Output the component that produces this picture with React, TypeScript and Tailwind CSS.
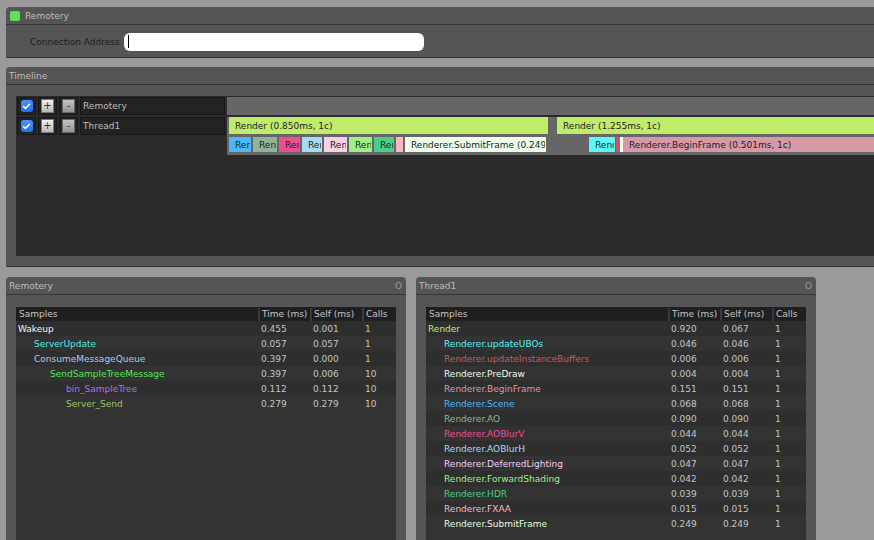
import { Check } from 'lucide-react';

type Sample = {
  name: string;
  depth: number;
  color: string;
  time: string;
  self: string;
  calls: string;
};

const indent = ['pl-[2px]', 'pl-[18px]', 'pl-[34px]', 'pl-[50px]'];

const remoterySamples: Sample[] = [
  { name: 'Wakeup', depth: 0, color: 'text-[#f2f2f2]', time: '0.455', self: '0.001', calls: '1' },
  { name: 'ServerUpdate', depth: 1, color: 'text-[#5ae6e6]', time: '0.057', self: '0.057', calls: '1' },
  { name: 'ConsumeMessageQueue', depth: 1, color: 'text-[#a9c9f0]', time: '0.397', self: '0.000', calls: '1' },
  { name: 'SendSampleTreeMessage', depth: 2, color: 'text-[#56e356]', time: '0.397', self: '0.006', calls: '10' },
  { name: 'bin_SampleTree', depth: 3, color: 'text-[#b56ce6]', time: '0.112', self: '0.112', calls: '10' },
  { name: 'Server_Send', depth: 3, color: 'text-[#9dc46b]', time: '0.279', self: '0.279', calls: '10' },
];

const threadSamples: Sample[] = [
  { name: 'Render', depth: 0, color: 'text-[#c0ec6a]', time: '0.920', self: '0.067', calls: '1' },
  { name: 'Renderer.updateUBOs', depth: 1, color: 'text-[#5cf2f2]', time: '0.046', self: '0.046', calls: '1' },
  { name: 'Renderer.updateInstanceBuffers', depth: 1, color: 'text-[#c85868]', time: '0.006', self: '0.006', calls: '1' },
  { name: 'Renderer.PreDraw', depth: 1, color: 'text-[#eefcec]', time: '0.004', self: '0.004', calls: '1' },
  { name: 'Renderer.BeginFrame', depth: 1, color: 'text-[#d699a7]', time: '0.151', self: '0.151', calls: '1' },
  { name: 'Renderer.Scene', depth: 1, color: 'text-[#4bb8f8]', time: '0.068', self: '0.068', calls: '1' },
  { name: 'Renderer.AO', depth: 1, color: 'text-[#94b396]', time: '0.090', self: '0.090', calls: '1' },
  { name: 'Renderer.AOBlurV', depth: 1, color: 'text-[#ef4d90]', time: '0.044', self: '0.044', calls: '1' },
  { name: 'Renderer.AOBlurH', depth: 1, color: 'text-[#a9daf3]', time: '0.052', self: '0.052', calls: '1' },
  { name: 'Renderer.DeferredLighting', depth: 1, color: 'text-[#f5d0ea]', time: '0.047', self: '0.047', calls: '1' },
  { name: 'Renderer.ForwardShading', depth: 1, color: 'text-[#9ef085]', time: '0.042', self: '0.042', calls: '1' },
  { name: 'Renderer.HDR', depth: 1, color: 'text-[#47d08a]', time: '0.039', self: '0.039', calls: '1' },
  { name: 'Renderer.FXAA', depth: 1, color: 'text-[#fbb6c5]', time: '0.015', self: '0.015', calls: '1' },
  { name: 'Renderer.SubmitFrame', depth: 1, color: 'text-[#e6fde0]', time: '0.249', self: '0.249', calls: '1' },
];

// pixel offsets inside the Thread1 timeline row
const bars = [
  { label: 'Render (0.850ms, 1c)', left: 2, width: 319, top: 0, height: 17, bg: 'bg-[#c0ec6a]' },
  { label: 'Render (1.255ms, 1c)', left: 330, width: 420, top: 0, height: 17, bg: 'bg-[#c0ec6a]' },
  { label: 'Renderer.Scene (0.068ms, 1c)', left: 2, width: 22, top: 20, height: 15, bg: 'bg-[#4bb8f8]' },
  { label: 'Renderer.AO (0.090ms, 1c)', left: 26, width: 24, top: 20, height: 15, bg: 'bg-[#94b396]' },
  { label: 'Renderer.AOBlurV (0.044ms, 1c)', left: 52, width: 21, top: 20, height: 15, bg: 'bg-[#ef4d90]' },
  { label: 'Renderer.AOBlurH (0.052ms, 1c)', left: 75, width: 20, top: 20, height: 15, bg: 'bg-[#a9daf3]' },
  { label: 'Renderer.DeferredLighting (0.047ms, 1c)', left: 97, width: 23, top: 20, height: 15, bg: 'bg-[#f5d0ea]' },
  { label: 'Renderer.ForwardShading (0.042ms, 1c)', left: 122, width: 23, top: 20, height: 15, bg: 'bg-[#9ef085]' },
  { label: 'Renderer.HDR (0.039ms, 1c)', left: 147, width: 20, top: 20, height: 15, bg: 'bg-[#47d08a]' },
  { label: '', left: 169, width: 7, top: 20, height: 15, bg: 'bg-[#fbb6c5]' },
  { label: 'Renderer.SubmitFrame (0.249ms, 1c)', left: 178, width: 141, top: 20, height: 15, bg: 'bg-[#effeec]' },
  { label: 'Renderer.updateUBOs (0.046ms, 1c)', left: 362, width: 26, top: 20, height: 15, bg: 'bg-[#5cf8f8]' },
  { label: '', left: 389, width: 3, top: 20, height: 15, bg: 'bg-[#d05262]' },
  { label: '', left: 393, width: 2, top: 20, height: 15, bg: 'bg-[#effeec]' },
  { label: 'Renderer.BeginFrame (0.501ms, 1c)', left: 396, width: 320, top: 20, height: 15, bg: 'bg-[#d699a7]' },
];

function TitleBar({ title, closable }: { title: string; closable?: boolean }) {
  return (
    <div className="flex h-[18px] items-center justify-between border-b border-[#363636] pl-[3px] pr-[4px] pt-px">
      <span className="text-[#bdbdbd]">{title}</span>
      {closable && <span className="text-[#9a9a9a]">O</span>}
    </div>
  );
}

function ThreadRow({ name }: { name: string }) {
  return (
    <div className="flex h-[18px] gap-[2px]">
      <div className="flex w-[19px] items-center justify-center border border-[#181818] bg-[#232323]">
        <div className="flex h-[12px] w-[12px] items-center justify-center rounded-[3px] bg-gradient-to-b from-[#4a94fb] to-[#1f6ff2]">
          <Check className="h-[9px] w-[9px] text-white" strokeWidth={4} />
        </div>
      </div>
      <div className="flex w-[19px] items-center justify-center border border-[#181818] bg-[#232323]">
        <div className="flex h-[14px] w-[13px] items-center justify-center border border-[#777] bg-gradient-to-b from-[#f2f2f2] to-[#b9b9b9] text-[10px] text-[#333]">
          +
        </div>
      </div>
      <div className="flex w-[19px] items-center justify-center border border-[#181818] bg-[#232323]">
        <div className="flex h-[14px] w-[13px] items-center justify-center border border-[#666] bg-gradient-to-b from-[#c4c4c4] to-[#959595] text-[10px] text-[#444]">
          -
        </div>
      </div>
      <div className="flex w-[145px] items-center border border-[#181818] bg-[#232323] pl-[2px] text-[#bdbdbd]">
        {name}
      </div>
    </div>
  );
}

function SamplePanel({ title, rows }: { title: string; rows: Sample[] }) {
  return (
    <div className="h-[300px] w-[400px] shrink-0 rounded-t-[4px] bg-[#555]">
      <TitleBar title={title} closable />
      <div className="px-[10px] pt-[12px]">
        <div className="h-[300px] w-[380px] bg-[#333]">
          <div className="flex h-[14px] bg-[#1f1f1f] pt-px text-[#c4c4c4]">
            <div className="flex w-[244px] items-center border-r-2 border-[#3a3a3a] pl-[3px]">Samples</div>
            <div className="flex w-[52px] items-center border-r-2 border-[#3a3a3a] pl-[2px]">Time (ms)</div>
            <div className="flex w-[52px] items-center border-r-2 border-[#3a3a3a] pl-[2px]">Self (ms)</div>
            <div className="flex flex-1 items-center pl-[2px]">Calls</div>
          </div>
          {rows.map((row, i) => (
            <div
              key={row.name}
              className={`flex h-[15px] items-center pt-px ${i % 2 === 0 ? 'bg-[#2e2e2e]' : 'bg-[#333]'}`}>
              <div className={`w-[244px] ${indent[row.depth]} ${row.color}`}>{row.name}</div>
              <div className="w-[52px] pl-[1px] text-[#c4c4c4]">{row.time}</div>
              <div className="w-[52px] pl-[1px] text-[#c4c4c4]">{row.self}</div>
              <div className="flex-1 pl-[1px] text-[#c4c4c4]">{row.calls}</div>
            </div>
          ))}
        </div>
      </div>
    </div>
  );
}

export default function App() {
  return (
    <div className="h-[540px] w-[874px] overflow-hidden bg-[#9a9a9a] pl-[6px] pt-[7px] font-['DejaVu_Sans',sans-serif] text-[9px] leading-none">
      {/* Connection */}
      <div className="w-[900px] rounded-t-[4px] border-b border-[#333] bg-[#555]">
        <div className="flex h-[18px] items-center gap-[5px] border-b border-[#363636] pl-[4px]">
          <div className="h-[10px] w-[10px] rounded-[2px] bg-[#5de35d]" />
          <span className="pt-px text-[#bdbdbd]">Remotery</span>
        </div>
        <div className="flex h-[32px] items-center pl-[24px] pt-px">
          <span className="pt-px text-[#1c1c1c]">Connection Address</span>
          <div className="ml-[4px] flex h-[18px] w-[300px] items-center rounded-[6px] bg-white pl-[4px]">
            <div className="h-[13px] w-px bg-black" />
          </div>
        </div>
      </div>

      {/* Timeline */}
      <div className="mt-[9px] w-[900px] rounded-t-[4px] border-b border-[#333] bg-[#555]">
        <TitleBar title="Timeline" />
        <div className="h-[181px] pb-[10px] pl-[10px] pt-[11px]">
          <div className="flex h-full bg-[#2b2b2b] pt-[1px]">
            <div className="flex w-[209px] flex-col gap-[2px] pl-[1px]">
              <ThreadRow name="Remotery" />
              <ThreadRow name="Thread1" />
            </div>
            <div className="ml-[2px] flex flex-1 flex-col gap-[2px]">
              <div className="h-[18px] bg-[#666]" />
              <div className="relative h-[38px] bg-[#666]">
                {bars.map((bar) => (
                  <div
                    key={bar.left}
                    className={`absolute flex items-center pl-[6px] pr-px pt-px text-[#222] ${bar.bg}`}
                    style={{ left: bar.left, width: bar.width, top: bar.top, height: bar.height }}>
                    <div className="overflow-hidden whitespace-nowrap">{bar.label}</div>
                  </div>
                ))}
              </div>
            </div>
          </div>
        </div>
      </div>

      {/* Sample trees */}
      <div className="mt-[10px] flex gap-[10px]">
        <SamplePanel title="Remotery" rows={remoterySamples} />
        <SamplePanel title="Thread1" rows={threadSamples} />
      </div>
    </div>
  );
}
